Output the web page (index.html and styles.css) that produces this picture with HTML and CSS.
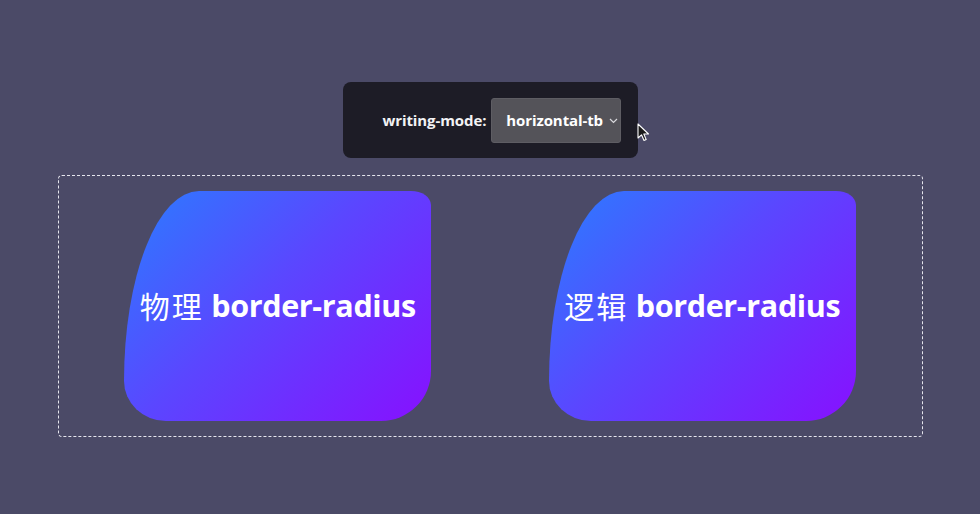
FILE: index.html
```html
<!DOCTYPE html>
<html lang="zh">
<head>
<meta charset="utf-8">
<link rel="stylesheet" href="styles.css">
</head>
<body>
<main class="page">
  <div class="panel">
    <span class="label">writing-mode:</span>
    <div class="select">
      <span>horizontal-tb</span>
      <svg class="chev" width="9" height="6" viewBox="0 0 9 6"><path d="M1 1 L4.5 4.5 L8 1" fill="none" stroke="#d8d8dc" stroke-width="1.2"/></svg>
    </div>
    <svg class="cursor" width="14" height="20" viewBox="0 0 14 20"><path d="M1 1 L1 15 L4.5 11.8 L7 17.5 L9.2 16.6 L6.8 11 L11.5 11 Z" fill="#1a1a1a" stroke="#ffffff" stroke-width="1.1" stroke-linejoin="round"/></svg>
  </div>
  <div class="stage">
    <div class="box"><span class="cjk">物理</span>&nbsp;border-radius</div>
    <div class="box"><span class="cjk">逻辑</span>&nbsp;border-radius</div>
  </div>
</main>
</body>
</html>
```

FILE: styles.css
```css
html, body {
  margin: 0;
  padding: 0;
  background: #4b4a67;
  width: 980px;
  height: 514px;
  overflow: hidden;
}
.page {
  display: flex;
  flex-direction: column;
  align-items: center;
  padding-top: 82px;
  font-family: "Open Sans", Lato, sans-serif;
}
.panel {
  position: relative;
  box-sizing: border-box;
  width: 295px;
  height: 76px;
  background: #1d1c26;
  border-radius: 8px;
  display: flex;
  align-items: center;
  padding: 0 16px 0 40px;
  gap: 5px;
}
.label {
  color: #f2f2f4;
  font-weight: 700;
  font-size: 15px;
  letter-spacing: -0.1px;
  white-space: nowrap;
}
.select {
  box-sizing: border-box;
  width: 130px;
  height: 45px;
  background: #545359;
  border: 1px solid #5e5d63;
  border-radius: 3px;
  display: flex;
  align-items: center;
  padding-left: 14px;
  gap: 6px;
  color: #ffffff;
  font-weight: 700;
  font-size: 15px;
  letter-spacing: -0.1px;
  white-space: nowrap;
}
.chev { margin-top: 1px; }
.cursor {
  position: absolute;
  left: 294px;
  top: 41px;
}
.stage {
  box-sizing: border-box;
  width: 865px;
  height: 262px;
  margin-top: 17px;
  border: 1px dashed #e6e6ee;
  border-radius: 4px;
  padding: 15px;
  display: grid;
  grid-template-columns: 1fr 1fr;
  column-gap: 16px;
  justify-items: center;
}
.box {
  width: 307px;
  height: 230px;
  border-radius: 75px 20px 50px 42px / 190px 14px 50px 40px;
  background: linear-gradient(135deg, #2a7dff 0%, #5a47ff 45%, #8710ff 100%);
  display: flex;
  align-items: center;
  justify-content: center;
  color: #ffffff;
  font-weight: 700;
  font-size: 30.5px;
  letter-spacing: -0.35px;
  white-space: nowrap;
  padding-bottom: 2px;
  box-sizing: border-box;
}
.cjk {
  font-family: "Noto Sans CJK SC", sans-serif;
  font-weight: 400;
  font-size: 30px;
  letter-spacing: 2px;
}
```
